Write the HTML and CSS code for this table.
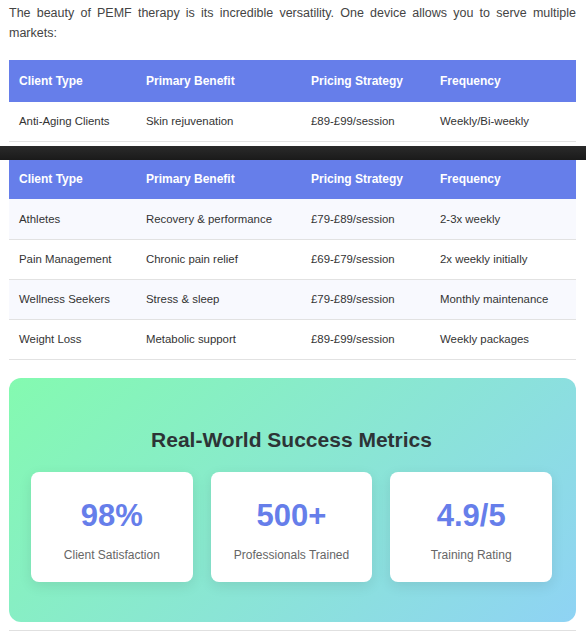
FILE: index.html
```html
<!DOCTYPE html>
<html lang="en">
<head>
<meta charset="utf-8">
<title>PEMF Markets</title>
<link rel="stylesheet" href="styles.css">
</head>
<body>
<div class="page">
  <p class="intro">The beauty of PEMF therapy is its incredible versatility. One device allows you to serve multiple markets:</p>

  <table class="market-table">
    <colgroup>
      <col class="col-type"><col class="col-benefit"><col class="col-price"><col class="col-freq">
    </colgroup>
    <thead>
      <tr><th>Client Type</th><th>Primary Benefit</th><th>Pricing Strategy</th><th>Frequency</th></tr>
    </thead>
    <tbody>
      <tr><td>Anti-Aging Clients</td><td>Skin rejuvenation</td><td>£89-£99/session</td><td>Weekly/Bi-weekly</td></tr>
    </tbody>
  </table>
</div>

<div class="seam"></div>

<div class="page">
  <table class="market-table market-table--cont">
    <colgroup>
      <col class="col-type"><col class="col-benefit"><col class="col-price"><col class="col-freq">
    </colgroup>
    <thead>
      <tr><th>Client Type</th><th>Primary Benefit</th><th>Pricing Strategy</th><th>Frequency</th></tr>
    </thead>
    <tbody>
      <tr class="row-alt row-first"><td>Athletes</td><td>Recovery &amp; performance</td><td>£79-£89/session</td><td>2-3x weekly</td></tr>
      <tr><td>Pain Management</td><td>Chronic pain relief</td><td>£69-£79/session</td><td>2x weekly initially</td></tr>
      <tr class="row-alt"><td>Wellness Seekers</td><td>Stress &amp; sleep</td><td>£79-£89/session</td><td>Monthly maintenance</td></tr>
      <tr><td>Weight Loss</td><td>Metabolic support</td><td>£89-£99/session</td><td>Weekly packages</td></tr>
    </tbody>
  </table>

  <section class="metrics">
    <h3 class="metrics-title">Real-World Success Metrics</h3>
    <div class="metrics-grid">
      <div class="metric-card">
        <div class="metric-value">98%</div>
        <div class="metric-label">Client Satisfaction</div>
      </div>
      <div class="metric-card">
        <div class="metric-value">500+</div>
        <div class="metric-label">Professionals Trained</div>
      </div>
      <div class="metric-card">
        <div class="metric-value">4.9/5</div>
        <div class="metric-label">Training Rating</div>
      </div>
    </div>
  </section>

  <hr class="divider">
</div>
</body>
</html>
```

FILE: styles.css
```css
* { box-sizing: border-box; }

body {
  margin: 0;
  background: #ffffff;
  font-family: "Liberation Sans", Arial, sans-serif;
  color: #444;
}

.page {
  padding: 0 10px 0 9px;
}

.intro {
  margin: 3px 0 17px;
  font-size: 12.5px;
  line-height: 20px;
  text-align: justify;
  color: #444;
}

.market-table {
  width: 100%;
  border-collapse: collapse;
  table-layout: fixed;
  font-size: 11.4px;
}

.col-type { width: 127px; }
.col-benefit { width: 165px; }
.col-price { width: 129px; }
.col-freq { width: 146px; }

.market-table th {
  background: #667eea;
  color: #ffffff;
  font-size: 12px;
  font-weight: bold;
  line-height: 14px;
  text-align: left;
  padding: 14px 10px;
}

.market-table--cont th {
  padding: 12px 10px 13px;
}

.market-table td {
  padding: 12px 10px;
  line-height: 15px;
  color: #333;
  border-bottom: 1px solid #e2e2e2;
  white-space: nowrap;
}

.row-first td {
  padding-top: 12.5px;
  padding-bottom: 12.5px;
}

.row-alt { background: #f8f9fe; }

.seam {
  height: 14px;
  margin-top: 4px;
  background: linear-gradient(#2a2a2a, #1a1a1a);
}

.metrics {
  margin-top: 18px;
  padding: 40px 24px 40px 22px;
  border-radius: 12px;
  background: linear-gradient(135deg, #84fab0 0%, #8fd3f4 100%);
}

.metrics-title {
  margin: 9px 0 19px;
  text-align: center;
  font-size: 21px;
  line-height: 26px;
  font-weight: bold;
  color: #2d3436;
}

.metrics-grid {
  display: grid;
  grid-template-columns: repeat(3, 1fr);
  gap: 18px;
}

.metric-card {
  background: #ffffff;
  border-radius: 8px;
  padding: 25px 12px 19px;
  text-align: center;
  box-shadow: 0 4px 14px rgba(0, 0, 0, 0.09);
}

.metric-value {
  font-size: 31px;
  line-height: 37px;
  font-weight: bold;
  color: #667eea;
  margin-bottom: 13px;
}

.metric-label {
  font-size: 12px;
  line-height: 16px;
  color: #666;
}

.divider {
  margin: 8px 0 0;
  border: 0;
  border-top: 1px solid #e0e0e0;
}
```
